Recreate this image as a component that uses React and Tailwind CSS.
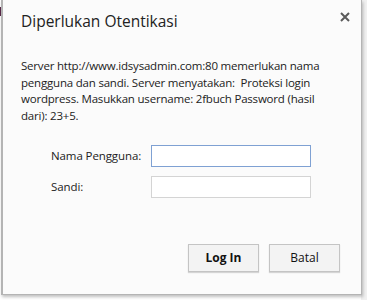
import React from 'react';

export default function App() {
  const font = { fontFamily: '"Open Sans", "Noto Sans", sans-serif' };
  return (
    <div className="w-[367px] h-[304px] bg-white relative overflow-hidden" style={font}>
      {/* bit of the page behind the dialog */}
      <div className="absolute left-0 top-[7px] w-[2px] h-[9px] bg-[#5a2a4a]" />
      <div className="absolute right-0 top-0 w-[6px] h-[300px] bg-[#f0f0f0]" />

      <div className="relative ml-[1px] w-[361px] h-[295px] bg-[#fbfbfb] border-l-2 border-r border-b border-[#b4b4b4] shadow-[1px_2px_3px_rgba(0,0,0,0.25)] flex flex-col">
        {/* Header */}
        <div className="flex items-start justify-between pl-[18px] pr-[10px] pt-[10px]">
          <h1 className="text-[15.5px] leading-[22px] text-[#222]">Diperlukan Otentikasi</h1>
          <button className="mt-[1px] w-[12px] h-[12px] flex items-center justify-center">
            <svg width="10" height="10" viewBox="0 0 10 10">
              <path d="M1 1 L9 9 M9 1 L1 9" stroke="#5a5a5a" strokeWidth="2" />
            </svg>
          </button>
        </div>

        {/* Message */}
        <p className="mt-[26px] pl-[18px] pr-[20px] text-[11.5px] leading-[16.5px] text-[#222] tracking-[-0.2px]">
          Server http://www.idsysadmin.com:80 memerlukan nama pengguna dan sandi. Server menyatakan:&nbsp; Proteksi login wordpress. Masukkan username: 2fbuch Password (hasil dari): 23+5.
        </p>

        {/* Form */}
        <div className="mt-[21px] pl-[48px] flex flex-col gap-[9px] text-[11.5px] text-[#222] tracking-[-0.1px]">
          <div className="flex items-center">
            <label className="w-[100px]">Nama Pengguna:</label>
            <input className="w-[160px] h-[22px] bg-white border border-[#7fa1d3] outline-none" />
          </div>
          <div className="flex items-center">
            <label className="w-[100px]">Sandi:</label>
            <input type="password" className="w-[160px] h-[22px] bg-white border border-[#d4d4d4] outline-none" />
          </div>
        </div>

        {/* Buttons */}
        <div className="mt-auto mb-[22px] pr-[21px] flex justify-end gap-[10px]">
          <button className="w-[71px] h-[28px] bg-[#f3f3f3] border border-[#c4c4c4] shadow-[0_1px_1px_rgba(0,0,0,0.15)] text-[12px] font-bold text-[#111]">
            Log In
          </button>
          <button className="w-[71px] h-[28px] bg-[#f3f3f3] border border-[#c4c4c4] shadow-[0_1px_1px_rgba(0,0,0,0.15)] text-[12px] text-[#111]">
            Batal
          </button>
        </div>
      </div>
    </div>
  );
}
